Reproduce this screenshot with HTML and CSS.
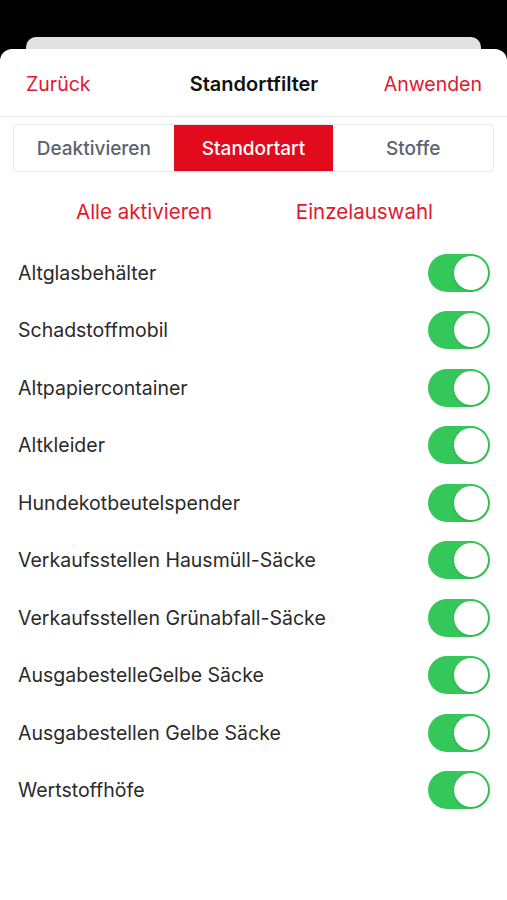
FILE: index.html
```html
<!DOCTYPE html>
<html lang="de">
<head>
    <meta charset="UTF-8">
    <meta name="viewport" content="width=device-width, initial-scale=1.0">
    <title>Standortfilter</title>
    <link rel="stylesheet" href="styles.css">
</head>
<body>

    <div class="back-card"></div>

    <div class="sheet">
        <div class="nav">
            <a href="#" class="nav-link">Zurück</a>
            <span class="nav-title">Standortfilter</span>
            <a href="#" class="nav-link right">Anwenden</a>
        </div>

        <div class="segments">
            <div class="segment">Deaktivieren</div>
            <div class="segment active">Standortart</div>
            <div class="segment">Stoffe</div>
        </div>

        <div class="actions">
            <a href="#" class="action">Alle aktivieren</a>
            <a href="#" class="action">Einzelauswahl</a>
        </div>

        <ul class="list">
            <li class="row"><span>Altglasbehälter</span><span class="toggle on"></span></li>
            <li class="row"><span>Schadstoffmobil</span><span class="toggle on"></span></li>
            <li class="row"><span>Altpapiercontainer</span><span class="toggle on"></span></li>
            <li class="row"><span>Altkleider</span><span class="toggle on"></span></li>
            <li class="row"><span>Hundekotbeutelspender</span><span class="toggle on"></span></li>
            <li class="row"><span>Verkaufsstellen Hausmüll-Säcke</span><span class="toggle on"></span></li>
            <li class="row"><span>Verkaufsstellen Grünabfall-Säcke</span><span class="toggle on"></span></li>
            <li class="row"><span>AusgabestelleGelbe Säcke</span><span class="toggle on"></span></li>
            <li class="row"><span>Ausgabestellen Gelbe Säcke</span><span class="toggle on"></span></li>
            <li class="row"><span>Wertstoffhöfe</span><span class="toggle on"></span></li>
        </ul>
    </div>

</body>
</html>
```

FILE: styles.css
```css
body {
    margin: 0;
    padding: 0;
    background-color: #000;
    font-family: Inter, "Noto Sans", sans-serif;
    height: 900px;
    overflow: hidden;
}

.back-card {
    margin: 37px 26px 0;
    height: 12px;
    background-color: #e1e1e1;
    border-radius: 10px 10px 0 0;
}

.sheet {
    background-color: #fff;
    border-radius: 12px 12px 0 0;
    height: 851px;
}

.nav {
    height: 68px;
    display: grid;
    grid-template-columns: 1fr auto 1fr;
    align-items: center;
    padding: 2px 25px 0 26px;
    border-bottom: 1px solid #e8e8e8;
    box-sizing: border-box;
}

.nav-link {
    color: #e0192e;
    text-decoration: none;
    font-size: 19.5px;
}

.nav-link.right {
    justify-self: end;
}

.nav-title {
    font-size: 20px;
    font-weight: 600;
    color: #111;
}

.segments {
    display: flex;
    margin: 7px 13px 0;
    height: 48px;
    border: 1px solid #e6e6e6;
    border-radius: 4px;
    box-sizing: border-box;
}

.segment {
    flex: 1;
    display: flex;
    align-items: center;
    justify-content: center;
    font-size: 19px;
    font-weight: 500;
    color: #5b6370;
}

.segment.active {
    background-color: #e20a1d;
    color: #fff;
}

.actions {
    display: flex;
    justify-content: space-between;
    align-items: center;
    height: 46px;
    margin-top: 16px;
    padding: 0 74px 0 76px;
}

.action {
    color: #e0192e;
    text-decoration: none;
    font-size: 20.5px;
}

.list {
    list-style: none;
    margin: 10px 0 0;
    padding: 0;
}

.row {
    height: 57.5px;
    display: flex;
    align-items: center;
    justify-content: space-between;
    padding: 0 17px 0 18px;
    font-size: 19.5px;
    color: #2a2a2a;
}

.toggle {
    position: relative;
    width: 62px;
    height: 38px;
    border-radius: 19px;
    background-color: #e5e5ea;
}

.toggle.on {
    background-color: #34c759;
}

.toggle::after {
    content: "";
    position: absolute;
    top: 2px;
    left: 2px;
    width: 34px;
    height: 34px;
    border-radius: 50%;
    background-color: #fff;
    box-shadow: 0 1px 3px rgba(0, 0, 0, 0.15);
}

.toggle.on::after {
    left: 26px;
}
```
